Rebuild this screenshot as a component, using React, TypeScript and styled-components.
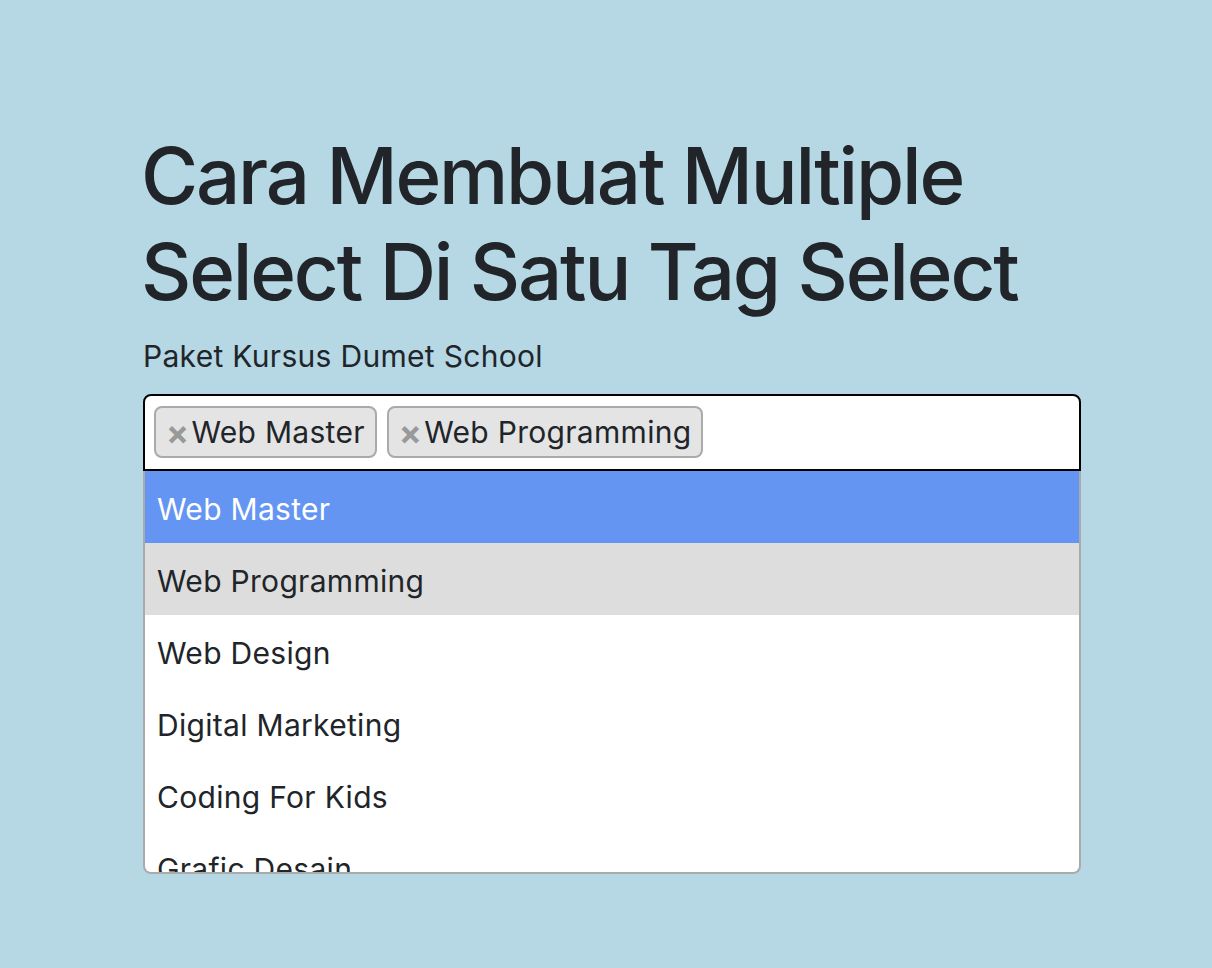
import React from "react";
import styled, { createGlobalStyle } from "styled-components";

const Global = createGlobalStyle`
  html, body { margin: 0; padding: 0; }
  body {
    background: #b5d8e4;
    font-family: Inter, "Noto Sans", sans-serif;
    color: #212529;
  }
`;

const Page = styled.main`
  padding: 128px 0 0 143px;
  width: 938px;
`;

const Title = styled.h1`
  margin: 0 0 18px -2px;
  font-size: 78px;
  font-weight: 500;
  line-height: 96px;
  letter-spacing: -2.2px;
`;

const Label = styled.label`
  display: block;
  margin: 0 0 20px 0;
  font-size: 30px;
  line-height: 36px;
  letter-spacing: 0.3px;
`;

const Select = styled.div`
  box-sizing: border-box;
  width: 938px;
`;

const Selection = styled.div`
  box-sizing: border-box;
  height: 77px;
  border: 2px solid #000;
  border-radius: 8px 8px 0 0;
  background: #fff;
  display: flex;
  align-items: flex-start;
  gap: 10px;
  padding: 10px 9px;
`;

const Tag = styled.span`
  box-sizing: border-box;
  height: 52px;
  display: inline-flex;
  align-items: center;
  gap: 2px;
  padding: 0 10px 0 10px;
  background: #e4e4e4;
  border: 2px solid #aaa;
  border-radius: 8px;
  font-size: 30px;
  letter-spacing: 0.3px;
`;

const Remove = styled.span`
  color: #999;
  font-weight: 700;
  font-size: 34px;
  line-height: 1;
  margin-top: 2px;
`;

const Dropdown = styled.ul`
  box-sizing: border-box;
  list-style: none;
  margin: 0;
  padding: 0;
  height: 403px;
  overflow: hidden;
  background: #fff;
  border: 2px solid #aaa;
  border-top: none;
  border-radius: 0 0 8px 8px;
`;

const Option = styled.li<{ $state?: "hl" | "sel" }>`
  box-sizing: border-box;
  height: 72px;
  display: flex;
  align-items: center;
  padding: 3px 12px 0;
  font-size: 30px;
  letter-spacing: 0.3px;
  background: ${(p) => (p.$state === "hl" ? "#6595f2" : p.$state === "sel" ? "#ddd" : "transparent")};
  color: ${(p) => (p.$state === "hl" ? "#fff" : "#212529")};
`;

const options = [
  "Web Master",
  "Web Programming",
  "Web Design",
  "Digital Marketing",
  "Coding For Kids",
  "Grafic Desain",
];

export default function App() {
  return (
    <>
      <Global />
      <Page>
        <Title>Cara Membuat Multiple Select Di Satu Tag Select</Title>
        <Label>Paket Kursus Dumet School</Label>
        <Select>
          <Selection>
            <Tag>
              <Remove>×</Remove>Web Master
            </Tag>
            <Tag>
              <Remove>×</Remove>Web Programming
            </Tag>
          </Selection>
          <Dropdown>
            {options.map((o, i) => (
              <Option key={o} $state={i === 0 ? "hl" : i === 1 ? "sel" : undefined}>
                {o}
              </Option>
            ))}
          </Dropdown>
        </Select>
      </Page>
    </>
  );
}
